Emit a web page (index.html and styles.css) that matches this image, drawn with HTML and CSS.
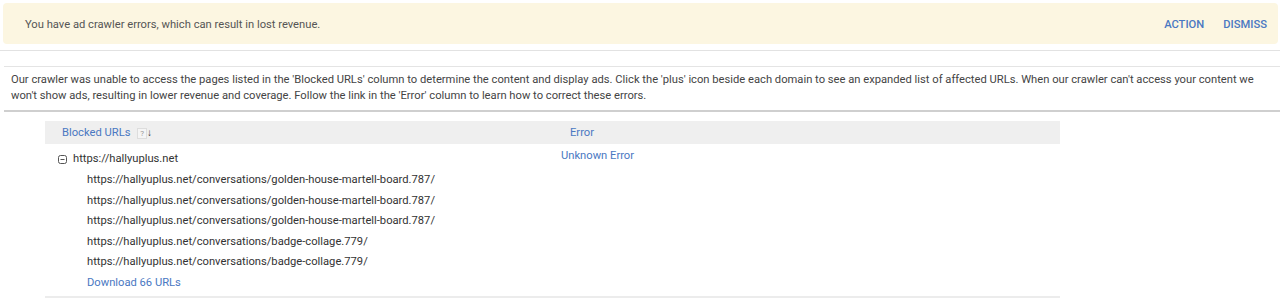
FILE: index.html
```html
<!DOCTYPE html>
<html lang="en">
<head>
    <meta charset="UTF-8">
    <title>Ad crawler errors</title>
    <link rel="stylesheet" href="styles.css">
</head>
<body>

<div class="banner">
    <span class="banner-text">You have ad crawler errors, which can result in lost revenue.</span>
    <div class="banner-actions">
        <a href="#">ACTION</a>
        <a href="#">DISMISS</a>
    </div>
</div>

<div class="divider"></div>

<div class="intro">
    <p>Our crawler was unable to access the pages listed in the 'Blocked URLs' column to determine the content and display ads. Click the 'plus' icon beside each domain to see an expanded list of affected URLs. When our crawler can't access your content we won't show ads, resulting in lower revenue and coverage. Follow the link in the 'Error' column to learn how to correct these errors.</p>
</div>

<div class="report">
    <div class="table">
        <div class="thead">
            <div class="col-url">Blocked URLs <span class="help">?</span><span class="sort">&#8595;</span></div>
            <div class="col-error">Error</div>
        </div>
        <div class="row">
            <div class="col-url">
                <div class="domain">
                    <svg class="toggle" width="9" height="9" viewBox="0 0 9 9"><rect x="0.5" y="0.5" width="8" height="8" rx="2" fill="none" stroke="#555"/><path d="M2.5 4.5h4" stroke="#555"/></svg>
                    https://hallyuplus.net
                </div>
                <ul class="urls">
                    <li>https://hallyuplus.net/conversations/golden-house-martell-board.787/</li>
                    <li>https://hallyuplus.net/conversations/golden-house-martell-board.787/</li>
                    <li>https://hallyuplus.net/conversations/golden-house-martell-board.787/</li>
                    <li>https://hallyuplus.net/conversations/badge-collage.779/</li>
                    <li>https://hallyuplus.net/conversations/badge-collage.779/</li>
                    <li><a href="#">Download 66 URLs</a></li>
                </ul>
            </div>
            <div class="col-error"><a href="#">Unknown Error</a></div>
        </div>
    </div>
</div>

</body>
</html>
```

FILE: styles.css
```css
body {
    font-family: Roboto, Arial, sans-serif;
    font-size: 11.2px;
    color: #444;
    margin: 0;
    padding: 3px 0 0 0;
    background: #fff;
}
a {
    color: #4a78c2;
    text-decoration: none;
}
.banner {
    display: flex;
    justify-content: space-between;
    align-items: center;
    height: 40px;
    margin: 0 2px 0 3px;
    padding: 1px 11px 0 22px;
    background: #fcf6e1;
    border-radius: 4px;
}
.banner-text {
    color: #555;
}
.banner-actions {
    display: flex;
    gap: 19px;
}
.banner-actions a {
    font-weight: 500;
}
.divider {
    margin-top: 6px;
    border-top: 1px solid #e2e2e2;
}
.intro {
    margin: 15px 0 0 4px;
    border-top: 1px solid #e4e4e4;
    border-bottom: 2px solid #cfcfcf;
    padding: 5px 20px 6px 7px;
}
.intro p {
    margin: 0;
    line-height: 16px;
    color: #444;
}
.report {
    padding: 9px 0 0 45px;
}
.table {
    width: 1015px;
    border-bottom: 2px solid #ececec;
}
.thead {
    display: flex;
    background: #efefef;
    height: 23px;
    align-items: center;
}
.col-url {
    box-sizing: border-box;
    width: 516px;
}
.col-error {
    flex: 1;
}
.thead .col-url {
    color: #4a78c2;
    padding-left: 17px;
}
.thead .col-error {
    color: #4a78c2;
    padding-left: 9px;
}
.help {
    display: inline-block;
    font-size: 8px;
    color: #999;
    background: #f5f5f5;
    border: 1px solid #ddd;
    padding: 0 2px;
    line-height: 9px;
    margin-left: 4px;
}
.sort {
    font-size: 10px;
    color: #333;
    font-weight: bold;
}
.row {
    display: flex;
    padding: 5px 0 3px 0;
}
.row .col-url {
    padding-left: 13px;
}
.domain {
    display: flex;
    align-items: center;
    gap: 6px;
    color: #333;
    line-height: 16px;
    padding-top: 2px;
}
.urls {
    list-style: none;
    margin: 3px 0 0 0;
    padding: 0 0 0 29px;
}
.urls li {
    line-height: 20.5px;
    color: #333;
}
```
